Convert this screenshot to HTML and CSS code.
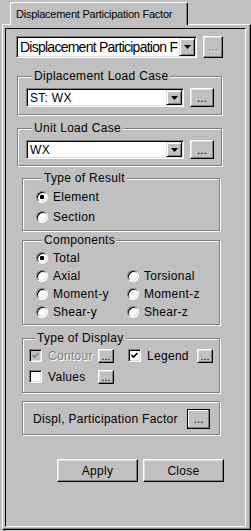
FILE: index.html
```html
<!DOCTYPE html>
<html>
<head>
  <title>Displacement Participation Factor</title>
  <link rel="stylesheet" href="styles.css">
</head>
<body>
  <div class="tabs">
    <div class="tab">Displacement Participation Factor</div>
  </div>

  <div class="panel">
    <div class="panel-inner">

      <div class="top-row">
        <div class="combo combo-large">
          <span class="combo-text">Displacement Participation F</span>
          <span class="drop"><svg width="7" height="4" viewBox="0 0 7 4"><polygon points="0,0 7,0 3.5,4" fill="#000"/></svg></span>
        </div>
        <button class="btn dots dots-top" disabled>...</button>
      </div>

      <div class="group g-disp">
        <div class="group-title">Diplacement Load Case</div>
        <div class="combo-row">
          <div class="combo combo-small">
            <span class="combo-text">ST: WX</span>
            <span class="drop"><svg width="7" height="4" viewBox="0 0 7 4"><polygon points="0,0 7,0 3.5,4" fill="#000"/></svg></span>
          </div>
          <button class="btn dots dots-group">...</button>
        </div>
      </div>

      <div class="group g-unit">
        <div class="group-title">Unit Load Case</div>
        <div class="combo-row">
          <div class="combo combo-small">
            <span class="combo-text">WX</span>
            <span class="drop"><svg width="7" height="4" viewBox="0 0 7 4"><polygon points="0,0 7,0 3.5,4" fill="#000"/></svg></span>
          </div>
          <button class="btn dots dots-group">...</button>
        </div>
      </div>

      <div class="group g-result">
        <div class="group-title">Type of Result</div>
        <div class="radio-list">
          <div class="option"><span class="radio checked"></span>Element</div>
          <div class="option"><span class="radio"></span>Section</div>
        </div>
      </div>

      <div class="group g-comp">
        <div class="group-title">Components</div>
        <div class="comp-grid">
          <div class="option"><span class="radio checked"></span>Total</div>
          <div></div>
          <div class="option"><span class="radio"></span>Axial</div>
          <div class="option"><span class="radio"></span>Torsional</div>
          <div class="option"><span class="radio"></span>Moment-y</div>
          <div class="option"><span class="radio"></span>Moment-z</div>
          <div class="option"><span class="radio"></span>Shear-y</div>
          <div class="option"><span class="radio"></span>Shear-z</div>
        </div>
      </div>

      <div class="group g-display">
        <div class="group-title">Type of Display</div>
        <div class="display-row">
          <div class="check-item">
            <span class="checkbox disabled"><svg width="9" height="9" viewBox="0 0 9 9"><polyline points="1.5,4 3.5,6 7.5,2" fill="none" stroke="#808080" stroke-width="1.7"/></svg></span>
            <span class="check-label muted">Contour</span>
            <button class="btn dots dots-small">...</button>
          </div>
          <div class="check-item">
            <span class="checkbox"><svg width="9" height="9" viewBox="0 0 9 9"><polyline points="1.5,4 3.5,6 7.5,2" fill="none" stroke="#000" stroke-width="1.7"/></svg></span>
            <span class="check-label">Legend</span>
            <button class="btn dots dots-small">...</button>
          </div>
        </div>
        <div class="display-row">
          <div class="check-item">
            <span class="checkbox"></span>
            <span class="check-label">Values</span>
            <button class="btn dots dots-small">...</button>
          </div>
        </div>
      </div>

      <div class="group g-factor">
        <span>Displ, Participation Factor</span>
        <button class="btn dots dots-default">...</button>
      </div>

      <div class="actions">
        <button class="btn action">Apply</button>
        <button class="btn action">Close</button>
      </div>

    </div>
  </div>
</body>
</html>
```

FILE: styles.css
```css
* {
  box-sizing: border-box;
}

body {
  margin: 0;
  width: 251px;
  height: 531px;
  overflow: hidden;
  background-color: #c0c0c0;
  font-family: "Liberation Sans", Arial, sans-serif;
  font-size: 12px;
  letter-spacing: 0.3px;
  color: #000000;
}

/* tab strip */
.tabs {
  display: flex;
  padding: 2px 0 0 10px;
}

.tab {
  position: relative;
  z-index: 1;
  width: 178px;
  height: 23px;
  margin-bottom: -1px;
  padding: 5px 0 0 5px;
  background-color: #c0c0c0;
  border: 1px solid;
  border-bottom: none;
  border-color: #ffffff #000000 #c0c0c0 #ffffff;
  border-radius: 2px 2px 0 0;
  box-shadow: inset -1px 0 #808080;
  font-size: 11px;
  letter-spacing: -0.25px;
  line-height: 13px;
}

/* outer panel */
.panel {
  width: 249px;
  height: 506px;
  margin-left: 2px;
  padding: 3px 4px 2px 2px;
  border: 1px solid;
  border-color: #ffffff #000000 #000000 #ffffff;
  box-shadow: inset -1px -1px #808080;
}

.panel-inner {
  height: 499px;
  border: 1px solid;
  border-color: #000000 #ffffff #ffffff #000000;
}

/* buttons */
.btn {
  display: flex;
  align-items: center;
  justify-content: center;
  padding: 0;
  background-color: #c0c0c0;
  border: 1px solid;
  border-color: #ffffff #000000 #000000 #ffffff;
  box-shadow: inset -1px -1px #808080, inset 1px 1px #dfdfdf;
  font-family: inherit;
  font-size: 12px;
  letter-spacing: 0.3px;
  color: #000000;
}

.dots {
  letter-spacing: 0;
}

.dots-top {
  width: 20px;
  height: 22px;
  color: #808080;
  text-shadow: 1px 1px #ffffff;
}

.dots-group {
  width: 24px;
  height: 19px;
}

.dots-small {
  width: 16px;
  height: 14px;
  font-size: 11px;
  line-height: 8px;
}

.dots-default {
  width: 23px;
  height: 20px;
  border-color: #000000;
  box-shadow: inset -1px -1px #808080, inset 1px 1px #ffffff;
}

/* combo boxes */
.top-row {
  display: flex;
  gap: 6px;
  margin: 7px 0 0 10px;
}

.combo {
  display: flex;
  padding: 1px;
  background-color: #ffffff;
  border: 1px solid;
  border-color: #808080 #ffffff #ffffff #808080;
  box-shadow: inset 1px 1px #000000, inset -1px -1px #dfdfdf;
}

.combo-large {
  width: 181px;
  height: 22px;
  font-size: 14px;
  letter-spacing: -0.75px;
}

.combo-small {
  width: 158px;
  height: 19px;
}

.combo-text {
  flex: 1;
  display: flex;
  align-items: center;
  padding-left: 2px;
  overflow: hidden;
  white-space: nowrap;
}

.drop {
  width: 16px;
  display: flex;
  align-items: center;
  justify-content: center;
  background-color: #c0c0c0;
  border: 1px solid;
  border-color: #dfdfdf #000000 #000000 #dfdfdf;
  box-shadow: inset 1px 1px #ffffff, inset -1px -1px #808080;
}

.combo-row {
  display: flex;
  gap: 6px;
  margin-top: 5px;
}

/* group boxes */
.group {
  border: 1px solid #808080;
  box-shadow: inset 1px 1px #ffffff, 1px 1px #ffffff;
}

.group-title {
  display: table;
  margin: -8px 0 0 6px;
  padding: 0 2px;
  line-height: 14px;
  background-color: #c0c0c0;
}

.g-disp {
  width: 205px;
  margin: 18px 0 0 11px;
  padding: 0 0 7px 8px;
}

.g-unit {
  width: 205px;
  margin: 13px 0 0 11px;
  padding: 0 0 6px 8px;
}

.g-result,
.g-comp,
.g-display,
.g-factor {
  width: 198px;
  margin-left: 16px;
}

.g-result {
  margin-top: 12px;
  padding: 0 0 3px 13px;
}

.g-comp {
  margin-top: 9px;
  padding: 0 0 3px 13px;
}

.g-display {
  margin-top: 13px;
  padding: 0 0 5px 6px;
}

.g-factor {
  display: flex;
  align-items: center;
  justify-content: space-between;
  margin-top: 8px;
  padding: 7px 9px 5px 10px;
}

/* radios */
.radio-list {
  margin-top: 2px;
}

.radio-list .option {
  height: 20px;
}

.comp-grid {
  display: grid;
  grid-template-columns: 91px auto;
  grid-auto-rows: 18px;
  margin-top: 2px;
}

.option {
  display: flex;
  align-items: center;
  gap: 5px;
}

.radio {
  width: 12px;
  height: 12px;
  border-radius: 50%;
  border: 1px solid;
  border-color: #808080 #ffffff #ffffff #808080;
  box-shadow: inset 1px 1px #000000, inset -1px -1px #dfdfdf;
  background-color: #ffffff;
}

.radio.checked {
  background: radial-gradient(circle, #000000 0 2px, #ffffff 2.5px);
}

/* checkboxes */
.display-row {
  display: flex;
  gap: 14px;
  height: 21px;
  align-items: center;
}

.display-row:first-of-type {
  margin-top: 5px;
}

.check-item {
  display: flex;
  align-items: center;
}

.checkbox {
  width: 13px;
  height: 13px;
  display: flex;
  align-items: center;
  justify-content: center;
  background-color: #ffffff;
  border: 1px solid;
  border-color: #808080 #ffffff #ffffff #808080;
  box-shadow: inset 1px 1px #000000, inset -1px -1px #dfdfdf;
}

.checkbox.disabled {
  background-color: #c0c0c0;
}

.check-label {
  width: 50px;
  margin-left: 6px;
}

.muted {
  color: #808080;
  text-shadow: 1px 1px #ffffff;
}

/* bottom buttons */
.actions {
  display: flex;
  gap: 5px;
  margin: 24px 0 0 51px;
}

.action {
  width: 81px;
  height: 23px;
}
```
